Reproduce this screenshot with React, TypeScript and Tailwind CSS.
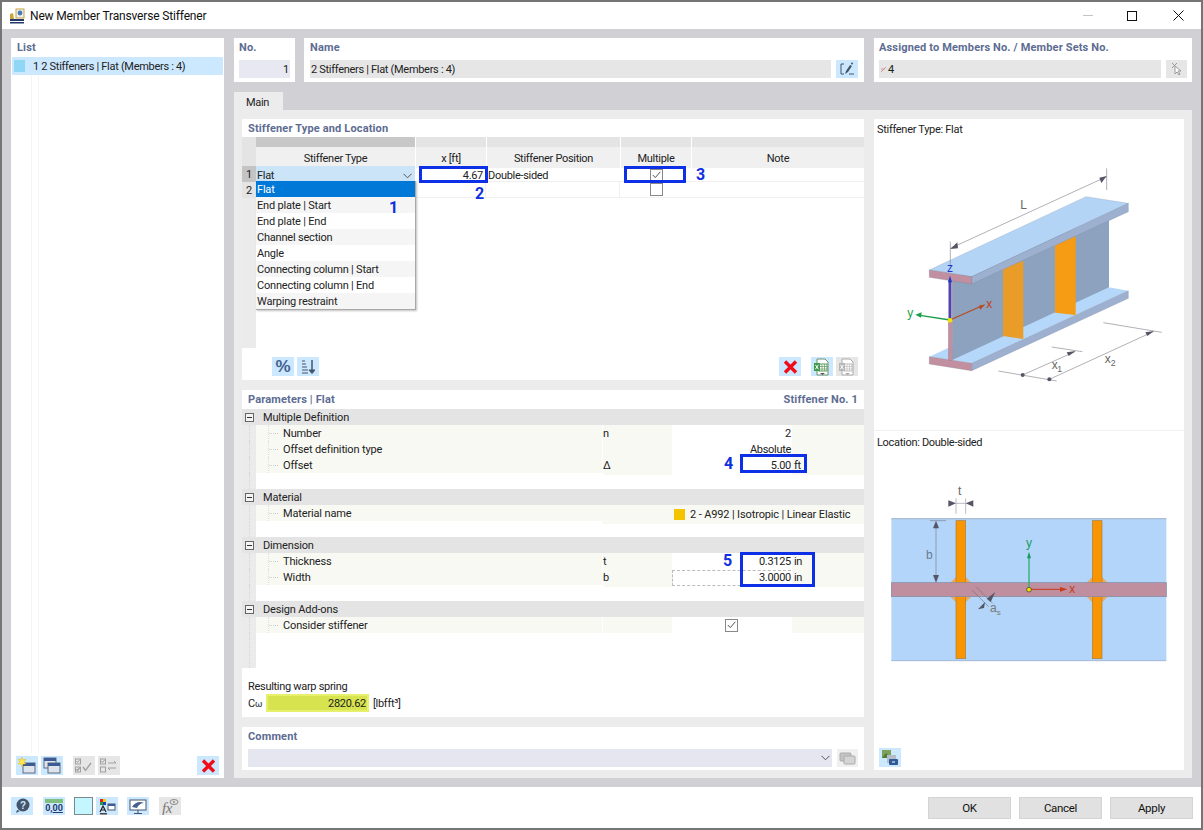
import React from 'react';

const font = { fontFamily: '"Roboto", "Liberation Sans", sans-serif' };

const Btn = ({ className = '', bg = 'bg-[#cce8ff]', children }: { className?: string; bg?: string; children: React.ReactNode }) => (
  <div className={`w-[22px] h-[19px] flex items-center justify-center shrink-0 ${bg} ${className}`}>{children}</div>
);

const RedX = () => (
  <svg width="15" height="14" viewBox="0 0 15 14"><path d="M2 1.500l11 11M13 1.500l-11 11" stroke="#f00c18" strokeWidth="3.400" /></svg>
);

const Chevron = () => (
  <svg width="9" height="6" viewBox="0 0 9 6"><path d="M.5 .8l4 4 4-4" fill="none" stroke="#555" strokeWidth="1" /></svg>
);

const Check = ({ className = '' }: { className?: string }) => (
  <div className={`w-[13px] h-[13px] border border-[#888] bg-white flex items-center justify-center ${className}`}>
    <svg width="9" height="8" viewBox="0 0 9 8"><path d="M.8 4l2.500 2.600L8.300 .8" fill="none" stroke="#555" strokeWidth="1" /></svg>
  </div>
);

const ExcelIcon = ({ muted = false }: { muted?: boolean }) => (
  <svg width="18" height="18" viewBox="0 0 18 18">
    <path d="M4 1h8l3 3v13H4z" fill="#fff" stroke={muted ? '#aaa' : '#6f8f6f'} />
    <rect x="6" y="6" width="8" height="7" fill="none" stroke={muted ? '#bbb' : '#5c9a5c'} />
    <path d="M6 8.500h8M6 11h8M9 6v7M11.500 6v7" stroke={muted ? '#bbb' : '#5c9a5c'} strokeWidth=".7" />
    <rect x="1" y="5" width="6" height="8" fill={muted ? '#b5b5b5' : '#3f9a4a'} />
    <path d="M2.400 6.800l3 4.400M5.400 6.800l-3 4.400" stroke="#fff" />
    <path d="M7 15h5l-2.500 2z" fill={muted ? '#aaa' : '#555'} />
  </svg>
);

const WindowIcon = ({ star = false }: { star?: boolean }) => (
  <svg width="18" height="17" viewBox="0 0 18 17">
    {star ? (
      <>
        <rect x="5" y="6" width="12" height="10" fill="#dfe4ea" stroke="#5b6b80" />
        <rect x="5" y="6" width="12" height="3" fill="#3d5c96" />
        <path d="M4 0l1 3 3-1-2 3 2 2-3 0-1 3-1-3-3 0 2-2-2-3 3 1z" fill="#ffe64d" stroke="#d8b400" strokeWidth=".4" />
      </>
    ) : (
      <>
        <rect x="1" y="1" width="12" height="10" fill="#dfe4ea" stroke="#5b6b80" />
        <rect x="1" y="1" width="12" height="3" fill="#3d5c96" />
        <rect x="5" y="6" width="12" height="10" fill="#dfe4ea" stroke="#5b6b80" />
        <rect x="5" y="6" width="12" height="3" fill="#3d5c96" />
      </>
    )}
  </svg>
);

const MutedCheckList = ({ swap = false }: { swap?: boolean }) => (
  <svg width="18" height="16" viewBox="0 0 18 16" fill="none" stroke="#a0a0a0">
    <rect x=".5" y="1" width="5" height="5" />
    <rect x=".5" y="9" width="5" height="5" />
    <path d="M1.500 3l1 1.500L5 1.500" />
    {!swap && <path d="M1.500 11l1 1.500L5 9.500M8 9l2.500 3.500L16 5" strokeWidth="1.300" />}
    {swap && <path d="M8 5h8l-2-2M16 10H8l2 2" />}
  </svg>
);

const SectionHead = ({ title, right, className = 'px-[6px]' }: { title: string; right?: string; className?: string }) => (
  <div className={`h-[18px] pt-[2px] flex items-center justify-between text-[11px] font-bold tracking-[0.15px] text-[#5d6c92] shrink-0 ${className}`}>
    <span>{title}</span>
    {right && <span>{right}</span>}
  </div>
);

const Panel = ({ className = '', children }: { className?: string; children: React.ReactNode }) => (
  <div className={`bg-white flex flex-col ${className}`}>{children}</div>
);

const Mark = ({ n, className }: { n: string; className: string }) => (
  <span className={`absolute text-[16px] font-bold leading-none tracking-normal text-[#1030e0] ${className}`}>{n}</span>
);

const BlueBox = ({ className }: { className: string }) => (
  <div className={`absolute border-[3px] border-[#0d2fe6] ${className}`} />
);

const dropdownItems = ['End plate | Start', 'End plate | End', 'Channel section', 'Angle', 'Connecting column | Start', 'Connecting column | End', 'Warping restraint'];

const StiffenerTable = () => (
  <div className="relative flex-1 flex text-[11px] text-[#222]">
    <div className="w-[14px] h-[211px] bg-[#ebebeb] flex flex-col shrink-0">
      <div className="h-[29px] bg-[#e4e4e4]" />
      <div className="h-4 pt-[2px] bg-[#c4c4c4] flex items-center justify-center">1</div>
      <div className="h-4 pt-[2px] bg-[#e4e4e4] flex items-center justify-center">2</div>
    </div>
    <div className="flex-1 flex flex-col">
      <div className="grid grid-cols-[159px_70px_133px_70px_1fr] h-[10px] gap-x-px">
        <div className="bg-[#c8c8c8]" />
        <div className="bg-[#e4e4e4]" />
        <div className="bg-[#e4e4e4]" />
        <div className="bg-[#e4e4e4]" />
        <div className="bg-[#e4e4e4]" />
      </div>
      <div className="grid grid-cols-[159px_70px_133px_70px_1fr] h-[19px] gap-x-px bg-white">
        {['Stiffener Type', 'x [ft]', 'Stiffener Position', 'Multiple', 'Note'].map(h => (
          <div key={h} className="bg-[#f0f0f0] pt-[4px] flex items-center justify-center">{h}</div>
        ))}
      </div>
      <div className="grid grid-cols-[159px_70px_133px_70px_1fr] h-4 gap-x-px border-b border-[#f0f0f0]">
        <div className="bg-[#cce4f7] pt-[2px] flex items-center justify-between pl-[1px] pr-[3px]">
          <span>Flat</span>
          <Chevron />
        </div>
        <div className="pt-[1px] flex items-center justify-end pr-[3px]">4.67</div>
        <div className="pt-[1px] flex items-center pl-[1px]">Double-sided</div>
        <div className="flex items-center justify-center"><Check /></div>
        <div />
      </div>
      <div className="grid grid-cols-[159px_70px_133px_70px_1fr] h-4 gap-x-px border-b border-[#f0f0f0]">
        <div />
        <div className="border-r border-[#f0f0f0]" />
        <div className="border-r border-[#f0f0f0]" />
        <div className="flex items-center justify-center"><div className="w-[13px] h-[13px] border border-[#888] bg-white" /></div>
        <div />
      </div>
    </div>
    <div className="absolute left-[14px] top-[44px] w-[160px] bg-white tracking-[-0.2px] border-r border-b border-[#a8a8a8] shadow-[1px_1px_2px_rgba(0,0,0,0.25)]">
      <div className="h-4 pt-[2px] bg-[#0078d7] text-white flex items-center pl-[1px]">Flat</div>
      {dropdownItems.map((item, i) => (
        <div key={item} className={`h-4 pt-[2px] flex items-center pl-[1px] ${i % 2 === 0 ? 'bg-[#f5f5f5]' : 'bg-white'}`}>{item}</div>
      ))}
    </div>
  </div>
);

const Gutter = () => (
  <div className="bg-[#ebebeb] flex justify-center h-full">
    <div className="w-px h-full border-l border-dotted border-[#d4d4d4]" />
  </div>
);

const TreeHead = ({ label }: { label: string }) => (
  <div className="h-4 bg-[#e4e4e4] flex items-center">
    <div className="w-[14px] h-4 flex items-center justify-center shrink-0">
      <div className="w-[9px] h-[9px] border border-[#666] bg-[#f4f4f4] flex items-center justify-center">
        <div className="w-[5px] h-px bg-[#333]" />
      </div>
    </div>
    <span className="pl-[7px] pt-[2px] tracking-[-0.15px]">{label}</span>
  </div>
);

const TreeLabel = ({ label }: { label: string }) => (
  <div className="bg-[#f8f9f3] flex items-center h-4">
    <span className="ml-3 w-[10px] h-full border-l border-dotted border-[#e0e0e0] flex items-center shrink-0">
      <span className="w-full border-t border-dotted border-[#ccc]" />
    </span>
    <span className="ml-[5px] pt-[2px] tracking-[-0.15px]">{label}</span>
  </div>
);

const TreeRow = ({ label, sym, children, unit }: { label: string; sym?: string; children?: React.ReactNode; unit?: string }) => (
  <div className="h-4 grid grid-cols-[14px_346px_70px_120px_1fr]">
    <Gutter />
    <TreeLabel label={label} />
    <div className="bg-[#f8f9f3] border-l border-white pt-px flex items-center">{sym}</div>
    <div className="bg-white pt-px flex items-center justify-end pr-[1px]">{children}</div>
    <div className="bg-[#f8f9f3] pt-px flex items-center pl-[2px]">{unit}</div>
  </div>
);

const Blank = ({ h = 'h-4' }: { h?: string }) => (
  <div className={`${h} grid grid-cols-[14px_1fr]`}><Gutter /><div /></div>
);

const ParamsTable = () => (
  <div className="relative flex flex-col text-[11px] text-[#222]">
    <TreeHead label="Multiple Definition" />
    <TreeRow label="Number" sym="n">2</TreeRow>
    <TreeRow label="Offset definition type">Absolute</TreeRow>
    <TreeRow label="Offset" sym="Δ" unit="ft">5.00</TreeRow>
    <Blank />
    <TreeHead label="Material" />
    <div className="h-4 grid grid-cols-[14px_346px_1fr]">
      <Gutter />
      <TreeLabel label="Material name" />
      <div className="bg-[#f8f9f3] flex items-center pl-[72px]">
        <span className="w-[11px] h-[11px] bg-[#f5c400] mr-[5px]" />
        <span className="pt-[2px] tracking-[-0.13px]">2 - A992 | Isotropic | Linear Elastic</span>
      </div>
    </div>
    <Blank />
    <TreeHead label="Dimension" />
    <TreeRow label="Thickness" sym="t" unit="in">0.3125</TreeRow>
    <TreeRow label="Width" sym="b" unit="in">
      <div className="w-full h-[16px] -mt-px pt-px flex items-center justify-end border-y border-l border-dashed border-[#bbb]">3.0000</div>
    </TreeRow>
    <Blank />
    <TreeHead label="Design Add-ons" />
    <TreeRow label="Consider stiffener">
      <div className="w-full flex justify-center -mt-px"><Check /></div>
    </TreeRow>
    <Blank h="h-[35px]" />
  </div>
);

const BeamSvg = () => (
  <svg width="310" height="275" viewBox="12 52 930 825" className="shrink-0">
    <polygon points="178,705 648,485 775,507 305,725" fill="#b5d8fa" />
    <polygon points="305,725 775,507 775,530 305,747" fill="#9db0cf" stroke="#7f8fa8" />
    <polygon points="178,705 305,725 305,747 178,727" fill="#c18f9f" stroke="#7f7f90" />
    <polygon points="247,470 717,280 717,497 247,715" fill="#8da2bf" />
    <polygon points="399,440 460,417 460,652 399,643" fill="#e99c28" />
    <polygon points="555,365 617,343 617,580 555,573" fill="#f59b14" />
    <rect x="235" y="467" width="12" height="250" fill="#c18f9f" stroke="#8a7f90" strokeWidth="1" />
    <polygon points="178,445 648,225 775,245 305,465" fill="#b3d4f5" stroke="#8ea2bd" />
    <polygon points="305,465 775,245 775,270 305,487" fill="#9db0cf" stroke="#7f8fa8" />
    <polygon points="178,445 305,465 305,487 178,467" fill="#c18f9f" stroke="#7f7f90" />
    <path d="M241 360v80M710 140v65M241 380L710 165" stroke="#8a8a92" strokeWidth="2" fill="none" />
    <polygon points="241,382 262,362 264,380" fill="#555566" />
    <polygon points="710,163 688,168 694,184" fill="#555566" />
    <path d="M240 595V478" stroke="#1a3ae0" strokeWidth="5" />
    <polygon points="240,462 234,482 246,482" fill="#1a3ac8" />
    <path d="M240 595L335 553" stroke="#b84a20" strokeWidth="4" />
    <polygon points="346,548 326,552 331,564" fill="#b84a20" />
    <path d="M240 595L150 581" stroke="#1aa04a" strokeWidth="4" />
    <polygon points="136,579 155,572 153,588" fill="#1aa04a" />
    <circle cx="240" cy="596" r="7" fill="#f5e000" />
    <path d="M385 748L560 778M545 676L637 690M700 603L875 632M458 760L615 690M538 773L850 630" stroke="#8a8a92" strokeWidth="2" fill="none" />
    <polygon points="617,688 590,692 596,703" fill="#555566" />
    <polygon points="852,628 826,632 832,643" fill="#555566" />
    <circle cx="458" cy="760" r="6" fill="#555566" />
    <circle cx="538" cy="773" r="6" fill="#555566" />
    <g fontFamily="Liberation Sans, sans-serif" fontSize="36" letterSpacing="0">
      <text x="451" y="262" fill="#666">L</text>
      <text x="231" y="452" fill="#1a3ac8">z</text>
      <text x="349" y="558" fill="#c0401a">x</text>
      <text x="112" y="587" fill="#1aa04a">y</text>
      <text x="545" y="742" fill="#666">x</text>
      <text x="562" y="752" fill="#666" fontSize="26">1</text>
      <text x="704" y="723" fill="#666">x</text>
      <text x="722" y="733" fill="#666" fontSize="26">2</text>
    </g>
  </svg>
);

const PlanSvg = () => (
  <svg width="310" height="240" viewBox="12 62 930 720" className="shrink-0">
    <rect x="64" y="268" width="825" height="427" fill="#b3d5fa" />
    <path d="M64 268H889" stroke="#7f93b0" strokeWidth="2" />
    <path d="M64 694H889" stroke="#a6bbd6" strokeWidth="3" />
    {[258, 667].map(x => (
      <g key={x}>
        <polygon points={`${x - 16},460 ${x},444 ${x + 29},444 ${x + 45},460`} fill="#f5a94f" stroke="#b09a80" />
        <polygon points={`${x - 16},502 ${x},518 ${x + 29},518 ${x + 45},502`} fill="#f5a94f" stroke="#b09a80" />
        <rect x={x} y="274" width="29" height="414" fill="#f89500" stroke="#a87d40" strokeWidth="2" />
      </g>
    ))}
    <rect x="64" y="460" width="825" height="42" fill="#bf8f9f" stroke="#7e8ba4" strokeWidth="2" />
    <path d="M180 274h48M198 285v165" stroke="#7f7f8c" strokeWidth="2" fill="none" />
    <polygon points="198,274 189,297 207,297" fill="#555566" />
    <polygon points="198,460 189,437 207,437" fill="#555566" />
    <path d="M258 207v46M287 207v46M258 222h29" stroke="#9a9aa4" strokeWidth="2" fill="none" />
    <polygon points="258,222 235,213 235,232" fill="#555566" />
    <polygon points="287,222 310,213 310,232" fill="#555566" />
    <path d="M318 472l50 50M306 482l50 50" stroke="#777" strokeWidth="2" />
    <polygon points="350,508 376,488 362,518" fill="#555566" />
    <polygon points="345,518 324,540 342,536" fill="#555566" />
    <path d="M477 480V385" stroke="#2fae72" strokeWidth="4" />
    <polygon points="477,367 471,387 483,387" fill="#1a9a5a" />
    <path d="M477 480H572" stroke="#c83a18" strokeWidth="3" />
    <polygon points="592,480 570,473 570,487" fill="#c83a18" />
    <circle cx="477" cy="481" r="7" fill="#f5e000" stroke="#333" strokeWidth="2" />
    <g fontFamily="Liberation Sans, sans-serif" fontSize="36" letterSpacing="0">
      <text x="264" y="196" fill="#666">t</text>
      <text x="168" y="390" fill="#6b7a92">b</text>
      <text x="468" y="354" fill="#1a9a5a">y</text>
      <text x="598" y="492" fill="#c83a18">x</text>
      <text x="360" y="548" fill="#777">a</text>
      <text x="380" y="556" fill="#777" fontSize="24">s</text>
    </g>
  </svg>
);

export default function App() {
  return (
    <div style={font} className="relative w-[1203px] h-[830px] flex flex-col overflow-hidden bg-white border-t-2 border-x-2 border-b-2 border-[#757575] text-[11px] tracking-[-0.3px] text-[#222]">
      {/* title bar */}
      <div className="h-[27px] flex items-center shrink-0 bg-white">
        <svg width="16" height="16" viewBox="0 0 16 16" className="ml-[7px]">
          <path d="M1 11V6l3-1 1 6z" fill="#c9a53a" />
          <rect x="7" y="1" width="8" height="9" fill="#e8eef6" stroke="#c9a53a" />
          <circle cx="11" cy="5" r="2.400" fill="#4a78b0" />
          <rect x="1" y="11" width="14" height="2" fill="#243a6d" />
          <rect x="1" y="14" width="14" height="1.500" fill="#243a6d" />
        </svg>
        <span className="ml-[5px] text-[12px] tracking-[-0.16px] text-[#111]">New Member Transverse Stiffener</span>
        <div className="ml-auto flex items-center">
          <div className="w-[10px] h-px bg-[#c4c4c4] mr-[34px]" />
          <div className="w-[10px] h-[10px] border border-[#111] mr-[36px]" />
          <svg width="11" height="11" viewBox="0 0 11 11" className="mr-[17px]"><path d="M.5 .5l10 10M10.500 .5l-10 10" stroke="#111" /></svg>
        </div>
      </div>

      {/* dialog body */}
      <div className="flex-1 bg-[#d0d0d5] flex pt-[9px] pl-[9px] pb-[9px] gap-[10px] min-h-0">
        <Panel className="w-[213px]">
          <SectionHead title="List" />
          <div className="mx-px mt-px h-[18px] bg-[#cce8ff] flex items-center">
            <span className="w-[11px] h-[12px] bg-[#90d6f5] ml-[2px] mr-[8px]" />
            <span className="pt-[3px]">1 2 Stiffeners | Flat (Members : 4)</span>
          </div>
          <div className="flex-1 flex pl-[20px]">
            <div className="w-[8px] border-x border-[#f4f4f4] mb-[3px]" />
          </div>
          <div className="h-[22px] flex items-start px-[5px] gap-[3px]">
            <Btn><WindowIcon star /></Btn>
            <Btn><WindowIcon /></Btn>
            <Btn bg="bg-[#e6e6e6]" className="ml-[7px]"><MutedCheckList /></Btn>
            <Btn bg="bg-[#e6e6e6]"><MutedCheckList swap /></Btn>
            <Btn className="ml-auto"><RedX /></Btn>
          </div>
        </Panel>

        <div className="w-[958px] flex flex-col">
          <div className="h-[44px] flex shrink-0">
            <Panel className="w-[61px] mr-[9px]">
              <SectionHead title="No." className="px-[5px]" />
              <div className="mx-[5px] mt-1 h-[18px] bg-[#e8e8f2] pt-[3px] flex items-center justify-end pr-[1px]">1</div>
            </Panel>
            <Panel className="w-[560px] mr-[10px]">
              <SectionHead title="Name" />
              <div className="flex mx-[6px] mt-1 gap-[5px]">
                <div className="flex-1 h-[18px] bg-[#e6e6e6] pt-[3px] flex items-center pl-[1px]">2 Stiffeners | Flat (Members : 4)</div>
                <Btn className="!h-[18px]">
                  <svg width="16" height="14" viewBox="0 0 16 14" fill="none">
                    <path d="M5 2H2v10h3M10 12h5" stroke="#44546a" />
                    <path d="M6 12l1-3 4-6 2 1-4 6z" fill="#44546a" />
                    <circle cx="13" cy="1.500" r="1" fill="#44546a" />
                  </svg>
                </Btn>
              </div>
            </Panel>
            <Panel className="w-[318px]">
              <SectionHead title="Assigned to Members No. / Member Sets No." className="px-[5px]" />
              <div className="flex mx-[5px] mt-1 gap-[5px]">
                <div className="flex-1 h-[18px] bg-[#e6e6e6] flex items-center pl-[1px]">
                  <svg width="7" height="7" viewBox="0 0 7 7" className="mr-[1px]"><path d="M1 6l5-5M1 3h4" stroke="#c99" /></svg>
                  <span className="pt-[3px]">4</span>
                </div>
                <Btn bg="bg-[#e6e6e6]" className="!w-[21px] !h-[18px]">
                  <svg width="12" height="14" viewBox="0 0 12 14" fill="none">
                    <path d="M1 1l5 5M6 1L1 6" stroke="#999" />
                    <path d="M4 4v8l2-2 2 3 1-1-2-3h3z" fill="#fff" stroke="#999" />
                  </svg>
                </Btn>
              </div>
            </Panel>
          </div>

          <div className="mt-[10px] h-[18px] flex shrink-0">
            <div className="w-[49px] bg-[#ececec] pt-[4px] flex items-center pl-[12px] text-[#222]">Main</div>
          </div>

          <div className="flex-1 bg-[#ececec] flex gap-[10px] pl-2 pt-[9px] pb-2 pr-2 min-h-0">
            <div className="w-[622px] flex flex-col gap-[10px]">
              <Panel className="h-[261px]">
                <SectionHead title="Stiffener Type and Location" />
                <StiffenerTable />
                <div className="h-[32px] pt-[9px] flex items-start pl-[30px] pr-[6px] shrink-0">
                  <Btn>
                    <span className="text-[17px] leading-none font-bold text-[#44618f] tracking-normal" style={{ fontFamily: '"Liberation Sans", sans-serif' }}>%</span>
                  </Btn>
                  <Btn className="ml-[3px]">
                    <svg width="14" height="15" viewBox="0 0 14 15" fill="none" stroke="#44546a">
                      <path d="M1 2h3M1 5h4M1 8h5M1 11h6M1 14h6" />
                      <path d="M11 1v11" strokeWidth="1.500" />
                      <path d="M8 11h6l-3 3.500z" fill="#44546a" />
                    </svg>
                  </Btn>
                  <Btn className="ml-auto"><RedX /></Btn>
                  <Btn className="ml-[10px]"><ExcelIcon /></Btn>
                  <Btn bg="bg-[#e6e6e6]" className="ml-[3px]"><ExcelIcon muted /></Btn>
                </div>
              </Panel>

              <Panel className="h-[327px]">
                <SectionHead title="Parameters | Flat" right="Stiffener No. 1" />
                <div className="h-px" />
                <ParamsTable />
                <div className="px-[6px] pt-[11px] h-[27px] leading-[16px]">Resulting warp spring</div>
                <div className="flex items-center pl-[6px] -mt-px">
                  <span className="w-[18px] pt-[2px]">C<span className="text-[9px]">ω</span></span>
                  <div className="w-[103px] h-[18px] bg-[#d7e34f] border-2 border-[#e6f06a] pt-[2px] flex items-center justify-end pr-[1px]">2820.62</div>
                  <span className="ml-[4px] pt-[2px]">[lbfft³]</span>
                </div>
              </Panel>

              <Panel className="h-[43px]">
                <SectionHead title="Comment" />
                <div className="flex mx-[6px] mt-1 gap-[5px]">
                  <div className="flex-1 h-[18px] bg-[#e6e6f0] flex items-center justify-end pr-[2px]"><Chevron /></div>
                  <Btn bg="bg-[#f0f0f0]" className="!w-[21px] !h-[18px]">
                    <svg width="17" height="13" viewBox="0 0 17 13">
                      <rect x="1" y="1" width="11" height="8" rx="1" fill="#c4c4c4" stroke="#aaa" />
                      <rect x="5" y="4" width="11" height="8" rx="1" fill="#d4d4d4" stroke="#aaa" />
                    </svg>
                  </Btn>
                </div>
              </Panel>
            </div>

            <Panel className="w-[310px]">
              <div className="h-[312px] flex flex-col border-b border-[#f0f0f0] shrink-0">
                <div className="pl-[3px] pt-[3px] h-[20px]">Stiffener Type: Flat</div>
                <BeamSvg />
              </div>
              <div className="pl-[3px] pt-[4px] h-[20px] shrink-0">Location: Double-sided</div>
              <div className="flex-1 flex flex-col min-h-0">
                <div className="-mt-[1px]"><PlanSvg /></div>
                <div className="mt-auto ml-[5px] mb-[3px] w-[22px] h-[19px] bg-[#cce8ff] flex items-center justify-center">
                  <svg width="18" height="17" viewBox="0 0 18 17">
                    <rect x="1" y="1" width="9" height="8" fill="#7fa05a" />
                    <path d="M1 9l4-5 5 5z" fill="#4f7d3a" />
                    <rect x="6" y="6" width="9" height="8" fill="#b4bcc8" />
                    <rect x="8" y="10" width="9" height="6" rx="1" fill="#2f5a98" />
                    <path d="M11 13h3" stroke="#fff" />
                  </svg>
                </div>
              </div>
            </Panel>
          </div>
        </div>
      </div>

      {/* footer */}
      <div className="h-[41px] bg-white flex items-start pt-[10px] shrink-0">
        <div className="flex items-center pl-[9px]">
          <Btn className="!h-[18px]">
            <svg width="17" height="16" viewBox="0 0 17 16">
              <circle cx="9" cy="7" r="6.500" fill="#44546a" />
              <path d="M3 12l-1 3 4-2z" fill="#44546a" />
              <text x="6" y="11" fontSize="10" fontWeight="700" fill="#cce8ff" fontFamily="Liberation Sans, sans-serif">?</text>
            </svg>
          </Btn>
          <Btn className="ml-[10px] !h-[18px]">
            <div className="flex flex-col items-center leading-none">
              <div className="w-[18px] h-[4px] bg-[#7fc07f]" />
              <span className="text-[9px] font-bold tracking-normal text-[#223a6d] leading-[11px]">0,<span className="underline">00</span></span>
            </div>
          </Btn>
          <div className="ml-[9px] w-[19px] h-[18px] bg-[#c4f6ff] border border-[#7a8a8a]" />
          <Btn className="ml-[3px] !h-[18px]">
            <svg width="18" height="17" viewBox="0 0 18 17">
              <rect x="2" y="1" width="3" height="3" fill="#e02020" />
              <rect x="5" y="1" width="3" height="3" fill="#e8d020" />
              <rect x="2" y="4" width="3" height="3" fill="#20a040" />
              <rect x="5" y="4" width="3" height="3" fill="#2040c0" />
              <path d="M2 14l3-6 3 6M3 12h4" stroke="#222" strokeWidth="1.200" fill="none" />
              <rect x="2" y="15" width="7" height="1.500" fill="#444" />
              <rect x="10" y="6" width="7" height="6" fill="#fff" stroke="#44546a" />
              <rect x="10" y="6" width="7" height="2" fill="#3d5c96" />
            </svg>
          </Btn>
          <Btn className="ml-[9px] !h-[18px]">
            <svg width="18" height="17" viewBox="0 0 18 17">
              <rect x="1" y="2" width="16" height="10" fill="#fff" stroke="#44546a" />
              <path d="M3 9c3-5 8-6 12-4-3 0-6 2-7 5z" fill="#44618f" />
              <path d="M9 12v3M5 15.500h8" stroke="#44546a" />
            </svg>
          </Btn>
          <Btn bg="bg-[#e6e6e6]" className="ml-[10px] !h-[18px]">
            <svg width="20" height="17" viewBox="0 0 20 17">
              <text x="2" y="15" fontSize="15" fontStyle="italic" fill="#777" fontFamily="Liberation Serif, serif">fx</text>
              <ellipse cx="14" cy="4" rx="4" ry="2.500" fill="none" stroke="#888" />
              <circle cx="14" cy="4" r="1" fill="#888" />
            </svg>
          </Btn>
        </div>
        <div className="ml-auto flex gap-2 pr-[8px]">
          {['OK', 'Cancel', 'Apply'].map(b => (
            <div key={b} className="w-[83px] h-[22px] bg-[#e1e1e1] border border-[#d4d4d4] pt-[2px] flex items-center justify-center text-[11.5px] text-[#111]">{b}</div>
          ))}
        </div>
      </div>

      {/* numbered callouts over the dialog */}
      <div className="absolute -top-[2px] -left-[2px] w-[1203px] h-[830px] pointer-events-none">
        <BlueBox className="left-[419px] top-[166px] w-[69px] h-[17px]" />
        <BlueBox className="left-[624px] top-[166px] w-[62px] h-[17px]" />
        <BlueBox className="left-[740px] top-[454px] w-[67px] h-[19px]" />
        <BlueBox className="left-[740px] top-[552px] w-[75px] h-[35px]" />
        <Mark n="1" className="left-[389px] top-[200px]" />
        <Mark n="2" className="left-[475px] top-[186px]" />
        <Mark n="3" className="left-[696px] top-[167px]" />
        <Mark n="4" className="left-[724px] top-[456px]" />
        <Mark n="5" className="left-[723px] top-[553px]" />
      </div>
    </div>
  );
}
